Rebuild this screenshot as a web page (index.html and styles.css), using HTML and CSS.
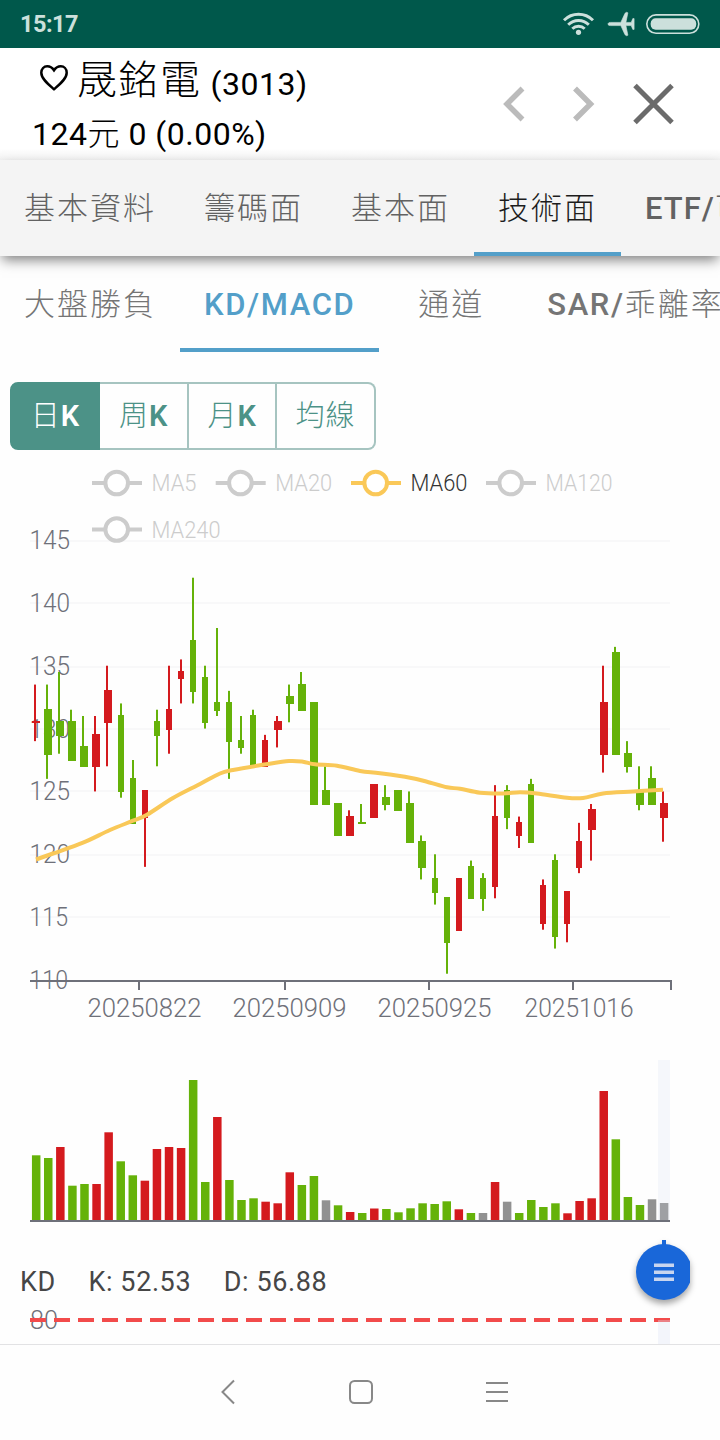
FILE: index.html
```html
<!DOCTYPE html>
<html lang="zh-Hant">
<head>
  <meta charset="UTF-8">
  <title>晟銘電 (3013)</title>
  <link rel="stylesheet" href="styles.css">
</head>
<body>
  <!-- Status bar -->
  <div class="status-bar">
    <span class="clock">15:17</span>
    <svg class="status-icons" width="140" height="28" viewBox="0 0 140 28">
      <g fill="none" stroke="#cce0dc" stroke-width="2.9">
        <path d="M4 10.200a20.500 20.500 0 0 1 29 0"/>
        <path d="M8.200 14.700a14.600 14.600 0 0 1 20.600 0"/>
        <path d="M12.300 18.800a8.800 8.800 0 0 1 12.400 0"/>
      </g>
      <circle cx="18.500" cy="22.300" r="2.600" fill="#cce0dc"/>
      <path fill="#cce0dc" stroke="#cce0dc" stroke-width=".6" d="M48 14c0-1 1-1.600 2.500-1.600h10.300L65 3.300l1.500-1 1.400.5-2 9.600h5.300l1.600-3.800h1.300v10.800h-1.300l-1.600-3.800h-5.300l2 9.600-1.400.5-1.500-1-4.200-9.100H50.500C49 15.600 48 15 48 14z"/>
      <rect x="86.800" y="4.900" width="52" height="18.400" rx="9.200" fill="none" stroke="#cce0dc" stroke-width="1.600"/>
      <rect x="90.700" y="8.300" width="45.500" height="11.500" rx="5" fill="#cce0dc"/>
    </svg>
  </div>

  <!-- Stock header -->
  <div class="stock-header">
    <div class="stock-info">
      <div class="stock-name">
        <svg class="heart" width="30" height="28" viewBox="0 0 30 28">
          <path d="M15 25.200 C9 20 2.300 14.700 2.300 8.700 C2.300 4.700 5 2.300 8.200 2.300 C11.200 2.300 13.500 4 15 6.300 C16.500 4 18.800 2.300 21.800 2.300 C25 2.300 27.700 4.700 27.700 8.700 C27.700 14.700 21 20 15 25.200z" fill="none" stroke="#000" stroke-width="2.500"/>
        </svg>
        <span class="name">晟銘電</span>
        <span class="code">(3013)</span>
      </div>
      <div class="stock-price">124<span class="unit">元</span> 0 (0.00%)</div>
    </div>
    <svg class="header-nav" width="176" height="44" viewBox="0 0 176 44" fill="none">
      <path d="M22.500 6.500L7 22l15.500 15.500M75 6.500L90.500 22 75 37.500" stroke="#bbb" stroke-width="5.500"/>
      <path d="M135 3.500l37 37M172 3.500l-37 37" stroke="#6b6b6b" stroke-width="5"/>
    </svg>
  </div>

  <div class="tabs main-tabs">
    <div class="tab">基本資料</div>
    <div class="tab">籌碼面</div>
    <div class="tab">基本面</div>
    <div class="tab active">技術面</div>
    <div class="tab"><b>ETF/</b>可轉債</div>
  </div>

  <div class="tabs sub-tabs">
    <div class="tab">大盤勝負</div>
    <div class="tab active"><b>KD/MACD</b></div>
    <div class="tab channel">通道</div>
    <div class="tab"><b>SAR/</b>乖離率</div>
  </div>

  <div class="period">
    <button class="selected">日<b>K</b></button>
    <button>周<b>K</b></button>
    <button>月<b>K</b></button>
    <button>均線</button>
  </div>

  <!-- Price and volume charts, filled in by chart.js -->
  <svg id="priceChart" width="720" height="590" viewBox="0 450 720 590"></svg>
  <svg id="volumeChart" width="720" height="200" viewBox="0 1040 720 200"></svg>

  <div class="kd">
    <div class="kd-values">
      <span>KD</span>
      <span class="k">K: 52.53</span>
      <span class="d">D: 56.88</span>
    </div>
    <svg class="kd-chart" width="720" height="44" viewBox="0 1300 720 44">
      <text class="axis-label" x="30" y="1329" textLength="28" lengthAdjust="spacingAndGlyphs">80</text>
      <path d="M30 1320h640" stroke="#f24b4b" stroke-width="4" stroke-dasharray="16 8"/>
      <rect x="658" y="1320" width="12" height="24" fill="#dfe4f5" fill-opacity=".35"/>
    </svg>
    <svg class="fab" width="70" height="74" viewBox="0 0 70 74">
      <rect x="42" y="0" width="4" height="8" fill="#1967d9"/>
      <circle cx="44" cy="32" r="28" fill="#1967d9"/>
      <path d="M34 25.200h20M34 32.200h20M34 39.200h20" stroke="#c8d5ef" stroke-width="3.600"/>
    </svg>
  </div>

  <!-- System navigation -->
  <div class="nav-bar">
    <svg width="16" height="26" viewBox="0 0 16 26"><path d="M14 1.500L2.500 13 14 24.500"/></svg>
    <svg width="26" height="26" viewBox="0 0 26 26"><rect x="2" y="2" width="22" height="22" rx="4.500"/></svg>
    <svg width="24" height="26" viewBox="0 0 24 26"><path d="M1 4h22M1 13h22M1 22h22"/></svg>
  </div>

  <script src="chart.js"></script>
</body>
</html>
```
FILE: styles.css
```css
body {
  margin: 0;
  width: 720px;
  height: 1440px;
  overflow: hidden;
  background-color: #fefefe;
  color: #000;
  font-family: Roboto, "Noto Sans CJK TC", sans-serif;
  display: flex;
  flex-direction: column;
}

svg {
  display: block;
  flex-shrink: 0;
}

.status-bar {
  height: 48px;
  box-sizing: border-box;
  padding: 0 20px;
  background-color: #00584b;
  display: flex;
  align-items: center;
  justify-content: space-between;
}

.clock {
  color: #cce0dc;
  font-size: 23.5px;
  font-weight: 700;
  letter-spacing: -0.5px;
}

.stock-header {
  height: 112px;
  box-sizing: border-box;
  padding: 0 44px 0 32px;
  display: flex;
  justify-content: space-between;
  align-items: center;
  background: linear-gradient(#fff 90%, #f3f3f3);
}

.stock-name {
  height: 62px;
  padding-left: 7px;
  display: flex;
  align-items: center;
}

.heart {
  width: 30px;
  height: 28px;
  margin-bottom: 2px;
}

.name {
  font-size: 40px;
  font-weight: 300;
  line-height: 62px;
  letter-spacing: 1.5px;
  margin: 4px 0 0 8px;
}

.code {
  font-size: 32px;
  letter-spacing: 0.5px;
  margin: 10px 0 0 9px;
}

.stock-price {
  height: 50px;
  line-height: 48px;
  font-size: 32px;
  letter-spacing: 0.5px;
}

.unit {
  font-weight: 300;
}

.tabs {
  height: 96px;
  display: flex;
  flex-shrink: 0;
  overflow: hidden;
  color: #757575;
  font-size: 31px;
  font-weight: 300;
  letter-spacing: 2px;
}

.tab {
  box-sizing: border-box;
  height: 96px;
  padding: 1px 24px 0;
  line-height: 96px;
  white-space: nowrap;
  border-bottom: 4px solid transparent;
}

.tab b {
  font-weight: 500;
  letter-spacing: 1.6px;
}

.main-tabs {
  position: relative;
  background-color: #f4f4f4;
  color: #626262;
  overflow: visible;
  overflow-x: clip;
  width: 720px;
  box-shadow: 0 6px 12px -2px rgba(0, 0, 0, 0.5);
}

.main-tabs .active {
  color: #1c1c1c;
  border-color: #539fc9;
}

.main-tabs b {
  letter-spacing: 1px;
}

.sub-tabs .active {
  color: #539fc9;
  border-color: #539fc9;
}

.sub-tabs .channel {
  padding: 1px 39px 0;
}

.period {
  display: flex;
  width: 366px;
  height: 68px;
  margin: 30px 0 0 10px;
  flex-shrink: 0;
}

.period button {
  flex: 0 0 88.5px;
  box-sizing: border-box;
  padding: 0 0 6px;
  border: 2px solid #a6c4c0;
  border-left: none;
  background: none;
  color: #4c9287;
  font-family: inherit;
  font-size: 29px;
  font-weight: 300;
}

.period button:last-child {
  flex: 1;
  border-radius: 0 8px 8px 0;
  letter-spacing: 1px;
}

.period b {
  font-weight: 600;
  margin-left: 1px;
}

.period .selected {
  flex-basis: 90px;
  background-color: #4c9287;
  border: 2px solid #4c9287;
  border-radius: 8px 0 0 8px;
  color: #fff;
}

.axis-label {
  font-size: 26px;
  font-weight: 300;
  fill: #6e7079;
}

.legend-label {
  font-size: 23px;
  font-weight: 300;
}

.kd {
  position: relative;
  height: 104px;
  flex-shrink: 0;
}

.kd-values {
  height: 60px;
  padding: 12px 0 0 20px;
  box-sizing: border-box;
  display: flex;
  line-height: 60px;
  font-size: 27px;
  letter-spacing: 0.6px;
  color: #464646;
}

.kd-values .k,
.kd-values .d {
  margin-left: 32.5px;
}

/* floating menu button, cut off by the chart's right edge */
.fab {
  position: absolute;
  left: 620px;
  top: 0;
  filter: drop-shadow(0 4px 3px rgba(0, 0, 0, 0.35));
}

.nav-bar {
  height: 96px;
  box-sizing: border-box;
  border-top: 1px solid #e2e2e4;
  padding: 0 211px 2px 220px;
  display: flex;
  align-items: center;
  justify-content: space-between;
}

.nav-bar svg {
  fill: none;
  stroke: #888;
  stroke-width: 2;
}
```
FILE: chart.js
```js
const RED = "#d41a1e";
const GREEN = "#65b209";
const GRAY = "#919191";
const LEFT = 30;
const STEP = 640 / 53;

// color, high, body top, body bottom, low
const candles = [
  ["R", 133.5, 130.5, 130.5, 129], ["G", 133.5, 131.5, 128, 126], ["G", 134.5, 130.5, 129.5, 128],
  ["G", 131.5, 130.5, 127.5, 127.5], ["G", 131, 128.5, 127, 127], ["R", 131, 129.5, 127, 125],
  ["R", 135, 133, 130.5, 127], ["G", 132, 131, 125, 124.5], ["G", 127.5, 126, 122.5, 122.5],
  ["R", 125, 125, 123, 119], ["G", 131.5, 130.5, 129.5, 127], ["R", 135, 131.5, 130, 128],
  ["R", 135.5, 134.5, 134, 132], ["G", 142, 137, 133, 132], ["G", 135, 134, 130.5, 130],
  ["G", 138, 132, 131.5, 131], ["G", 133, 132, 129, 126], ["G", 131, 129, 128.5, 128],
  ["G", 131.5, 131, 127, 127], ["R", 129.5, 129, 127, 127], ["R", 131, 130.5, 130, 128.5],
  ["G", 133.5, 132.5, 132, 130.5], ["G", 134.5, 133.5, 131.5, 131.5], ["G", 132, 132, 124, 124],
  ["G", 127, 125, 124, 124], ["G", 124, 124, 121.5, 121.5], ["R", 123.5, 123, 121.5, 121.5],
  ["G", 124, 122.5, 122.5, 122.5], ["R", 125.5, 125.5, 123, 123], ["G", 125.5, 124.5, 124, 123.5],
  ["G", 125, 125, 123.5, 123.5], ["G", 125, 124, 121, 121], ["G", 121.5, 121, 119, 118],
  ["G", 120, 118, 117, 116], ["G", 116.5, 116.5, 113, 110.5], ["R", 118, 118, 114, 114],
  ["G", 119.5, 119, 116.5, 116.5], ["G", 118.5, 118, 116.5, 115.5], ["R", 125.5, 123, 117.5, 116.5],
  ["G", 125.5, 125, 123, 122], ["R", 123, 122.5, 121.5, 120.5], ["G", 126, 125.5, 121, 121],
  ["R", 118, 117.5, 114.5, 114], ["G", 120, 119.5, 113.5, 112.5], ["R", 117, 117, 114.5, 113],
  ["R", 122.5, 121, 119, 118.5], ["R", 124, 123.5, 122, 119.5], ["R", 135, 132, 128, 126.5],
  ["G", 136.5, 136, 128, 128], ["G", 129, 128, 127, 126.5], ["G", 127, 125, 124, 123.5],
  ["G", 127, 126, 124, 124], ["R", 125, 124, 123, 121]
];

// bar heights, one for each candle
const volumes = [
  64.7, 62, 73, 34.3, 36, 36, 87.7, 58.7, 44.7, 39.3, 71, 73, 72, 140, 38, 103, 40, 20, 21.7, 18.3,
  16.7, 47.7, 35, 44, 19.7, 14.7, 8, 7, 11.5, 11, 7.7, 11.7, 16.7, 16, 18.7, 10.7, 7, 7, 38, 18.3,
  7, 20, 13, 16.7, 6.7, 19, 21.7, 129, 80.7, 23, 15, 20.7, 17
];
const volumeColors = "GGRGGRRGGRRRRGGRGGGRRRGGNGRGRGGGGGGRGNRNGGGGRRRRGGGNN";

const ma60 = [
  [36, 859.5], [53, 853.5], [83, 842.7], [110, 830], [133, 820.7], [147, 814.7], [173, 798],
  [200, 784], [220, 773.5], [233, 770], [266, 764.3], [289, 761], [303, 761.7], [315, 764.3],
  [337, 765.7], [360, 771], [380, 773.3], [410, 777.7], [427, 781.7], [447, 787.3], [460, 788.7],
  [480, 792.7], [503, 793.5], [520, 792.3], [537, 793.5], [567, 797.8], [583, 798], [603, 793.5],
  [633, 791.5], [663, 789.7]
];

function colorOf(c) {
  return c === "R" ? RED : c === "G" ? GREEN : GRAY;
}

function yOf(price) {
  return 980 - (price - 110) * 440 / 35;
}

function snap(v) {
  const r = Math.round(v);
  return r % 2 === 0 ? r - 1 : r;
}

function snapUp(v) {
  const r = Math.round(v);
  return r % 2 === 0 ? r + 1 : r;
}

function rect(x, y, w, h, fill) {
  return `<rect x="${x}" y="${y}" width="${w}" height="${h}" fill="${fill}"/>`;
}

function label(cls, x, y, width, text, extra) {
  return `<text class="${cls}" x="${x}" y="${y}" textLength="${width}" lengthAdjust="spacingAndGlyphs" ${extra || ""}>${text}</text>`;
}

function smoothPath(pts) {
  let d = `M${pts[0]}`;
  for (let i = 0; i < pts.length - 1; i++) {
    const a = pts[i - 1] || pts[i], b = pts[i], c = pts[i + 1], e = pts[i + 2] || c;
    d += `C${b[0] + (c[0] - a[0]) / 6} ${b[1] + (c[1] - a[1]) / 6} ${c[0] - (e[0] - b[0]) / 6} ${c[1] - (e[1] - b[1]) / 6} ${c}`;
  }
  return d;
}

function drawPrice() {
  let out = "";
  for (let p = 115; p <= 145; p += 5) {
    out += rect(LEFT, snapUp(yOf(p)) - 1, 640, 2, "#f8f8f9");
  }

  // x axis
  out += rect(LEFT, 980, 642, 2, "#6e7079");
  [139, 285, 429, 573, 671].forEach(x => { out += rect(x - 1, 981, 2, 9, "#6e7079"); });
  [["20250822", 88], ["20250909", 233], ["20250925", 378], ["20251016", 525]].forEach(([t, x]) => {
    out += label("axis-label", x - 0.5, 1017, t === "20251016" ? 109 : 114, t);
  });

  // y axis labels
  for (let p = 110; p <= 145; p += 5) {
    out += label("axis-label", 29.5, Math.round(yOf(p)) + 9, p === 110 || p === 115 ? 38.5 : 40.5, p);
  }

  candles.forEach(([c, high, top, bottom, low], i) => {
    const center = LEFT + STEP * (i + 0.5);
    const x = snap(center);
    const width = Math.round(center) % 2 === 0 ? 8 : 6;
    const y1 = Math.round(yOf(top)) - 1;
    const y2 = Math.round(yOf(bottom)) + 1;
    out += rect(x - 1, yOf(high), 2, yOf(low) - yOf(high), colorOf(c));
    out += rect(x - 3, y1, width, y2 - y1, colorOf(c));
  });

  out += `<path d="${smoothPath(ma60)}" fill="none" stroke="#f9c858" stroke-width="4" stroke-linejoin="bevel"/>`;

  // legend
  [["MA5", 92, 483, 45], ["MA20", 215.7, 483, 57], ["MA60", 351, 483, 57], ["MA120", 486, 483, 67], ["MA240", 92, 529.5, 69]].forEach(([t, x, y, w]) => {
    const on = t === "MA60";
    const color = on ? "#fac858" : "#ccc";
    out += `<path d="M${x} ${y}h50" stroke="${color}" stroke-width="4"/>`;
    out += `<circle cx="${x + 24.7}" cy="${y}" r="11.300" fill="#fff" stroke="${color}" stroke-width="4"/>`;
    out += label("legend-label", x + 59.5, y + 8, w, t, `fill="${on ? "#333" : "#ccc"}"`);
  });
  document.getElementById("priceChart").innerHTML = out;
}

function drawVolume() {
  let out = "";
  volumes.forEach((h, i) => {
    out += rect(LEFT + STEP * (i + 0.5) - 4.1, 1220 - h, 8.5, h, colorOf(volumeColors[i]));
  });
  out += rect(LEFT, 1220, 640, 2, "#6e7079");
  // highlighted day
  out += `<rect x="658" y="1060" width="12" height="160" fill="#d2dbee" fill-opacity=".2"/>`;
  document.getElementById("volumeChart").innerHTML = out;
}

drawPrice();
drawVolume();
```
